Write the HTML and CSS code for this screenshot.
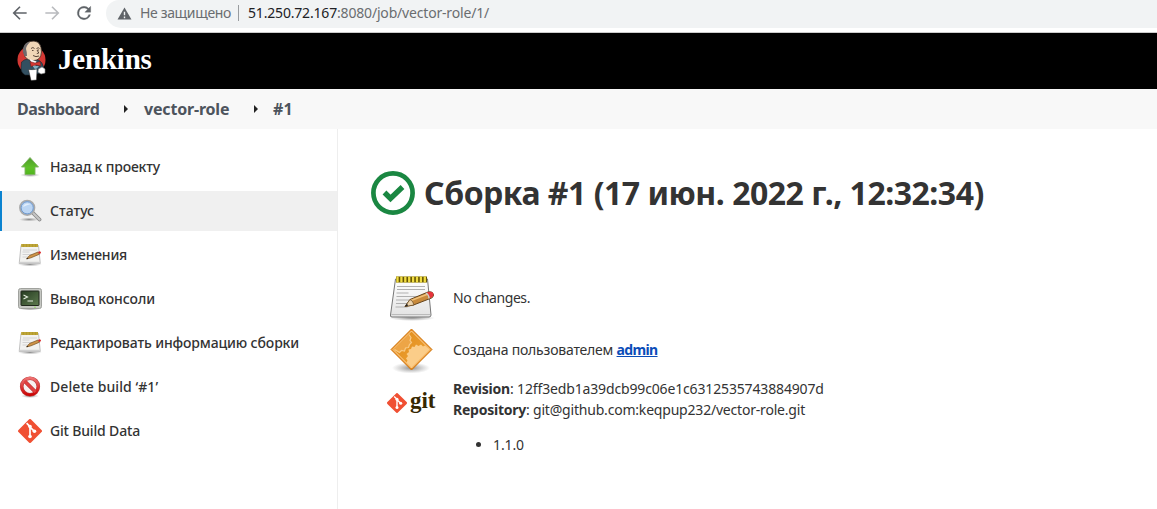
FILE: index.html
```
<!DOCTYPE html>
<html lang="ru">
<head>
<meta charset="utf-8">
<title>vector-role #1 [Jenkins]</title>
<link rel="stylesheet" href="styles.css">
</head>
<body>
<svg class="defs" aria-hidden="true">
  <defs>
    <linearGradient id="paper" x1="0" y1="0" x2="0" y2="1"><stop offset="0" stop-color="#fff"/><stop offset="1" stop-color="#e2e2e2"/></linearGradient>
    <linearGradient id="green" x1="0" y1="0" x2="0" y2="1"><stop offset="0" stop-color="#4f9a2c"/><stop offset=".6" stop-color="#5fc12a"/><stop offset="1" stop-color="#50b51d"/></linearGradient>
    <linearGradient id="screen" x1="0" y1="0" x2="1" y2="1"><stop offset="0" stop-color="#253b20"/><stop offset="1" stop-color="#5e7b50"/></linearGradient>
    <linearGradient id="red" x1="0" y1="0" x2="0" y2="1"><stop offset="0" stop-color="#ee7070"/><stop offset="1" stop-color="#cc0505"/></linearGradient>
    <linearGradient id="orange" x1="0" y1="0" x2="1" y2="1"><stop offset="0" stop-color="#e08a16"/><stop offset="1" stop-color="#f0a63c"/></linearGradient>
    <radialGradient id="shade"><stop offset="0" stop-color="#555" stop-opacity=".65"/><stop offset="1" stop-color="#777" stop-opacity="0"/></radialGradient>
  </defs>
  <symbol id="notepad" viewBox="0 0 48 48">
    <ellipse cx="24" cy="43" rx="23" ry="3" fill="url(#shade)"/>
    <path d="M7.500 4h32l3.500 36q0 2-2 2H4q-2 0-1.500-2z" fill="url(#paper)" stroke="#777"/>
    <path d="M3.500 39.500h38.500" stroke="#bbb"/>
    <path d="M9 11.500h28M9 14.500h28M8.500 18h12M8.500 21.500h25M8 25h20M8 28.500h15M7.500 32h12" stroke="#b0b0b0"/>
    <path d="M8 4.500h31" stroke="#665500" stroke-width="6"/>
    <path d="M9.500 1.500v6M13.400 1.500v6M17.300 1.500v6M21.200 1.500v6M25.100 1.500v6M29 1.500v6M32.900 1.500v6M36.800 1.500v6" stroke="#f0dc42" stroke-width="2.300"/>
    <path d="M17 31.500l5-7 18-7.500q5-1 5.500 3 0 2-2 3l-18 7z" fill="#c88a3c" stroke="#65451d"/>
    <path d="M23 25.500l17-6.500" stroke="#efc078" stroke-width="1.500"/>
    <path d="M17 31.500l5-7q3 1 4 5.500z" fill="#edd3aa" stroke="#65451d" stroke-width=".7"/>
    <path d="M17 31.500l2-3 1 2.200z" fill="#222"/>
    <path d="M40.500 17q4.500-1 5 2.500 0 2-2 3l-2 .8q.5-3.500-3-5.500z" fill="#e6343c"/>
    <path d="M38 18q3 2 3 5.500" fill="none" stroke="#ccc" stroke-width="1.500"/>
  </symbol>
  <symbol id="notepad-small" viewBox="0 0 24 24">
    <ellipse cx="12" cy="21.500" rx="12" ry="1.800" fill="url(#shade)"/>
    <path d="M3 2.500h17.500l1.800 18H1.200z" fill="#f2f2f0" stroke="#bbb" stroke-width=".9"/>
    <path d="M1.800 19.500h20" stroke="#d0d0d0" stroke-width="1.500"/>
    <path d="M5 7h14M4.500 9h7M4.500 11.500h11M4.500 14h6" stroke="#cfcfcf" stroke-width=".9"/>
    <path d="M3.200 2.500h16.800" stroke="#b39a2e" stroke-width="3"/>
    <path d="M4 1v3M7 1v3M10 1v3M13 1v3M16 1v3M19 1v3" stroke="#cbb647" stroke-width=".8"/>
    <path d="M8.500 16l3-3.500 8.500-3.500 1.500 2.200-8.500 3.600z" fill="#cf9448" stroke="#76501f" stroke-width=".7"/>
    <path d="M8.500 16l1-1.300.7 1z" fill="#111"/>
    <path d="M20 9l1.500-.7q1.600 0 1.600 1.800l-1.600 1z" fill="#d92b2b"/>
  </symbol>
  <symbol id="git-mark" viewBox="0 0 92 92">
    <path d="M90.200 41.900 50.200 1.900a5.900 5.900 0 0 0-8.400 0L1.900 41.900a5.900 5.900 0 0 0 0 8.300l40 40a5.900 5.900 0 0 0 8.300 0l40-40a5.900 5.900 0 0 0 0-8.300z" fill="#f05033"/>
    <path d="M33 16 46 29v38M46 31l17 16" fill="none" stroke="#fff" stroke-width="6.500"/>
    <circle cx="46" cy="29" r="7" fill="#fff"/><circle cx="46" cy="67" r="7" fill="#fff"/><circle cx="63" cy="47" r="7" fill="#fff"/>
  </symbol>
</svg>

<div class="browser-bar">
  <svg class="nav-icon" viewBox="0 0 24 24" fill="none" stroke="#5f6368" stroke-width="2"><path d="M20 12H5M12 4.500 4.500 12l7.500 7.500"/></svg>
  <svg class="nav-icon" viewBox="0 0 24 24" fill="none" stroke="#b9bbbe" stroke-width="2"><path d="M4 12h15M12 4.500l7.500 7.500-7.500 7.500"/></svg>
  <svg class="nav-icon" viewBox="0 0 24 24"><path d="M17.650 6.350A7.950 7.950 0 0 0 12 4a8 8 0 1 0 7.730 10h-2.080A6 6 0 1 1 12 6c1.660 0 3.140.69 4.220 1.780L13 11h7V4z" fill="#5f6368" stroke="#5f6368" stroke-width=".4"/></svg>
  <div class="address">
    <svg class="warning" viewBox="0 0 16 14"><path d="M8 .5 15.500 13.500H.5z" fill="#5f6368"/><path d="M8 5v4M8 10.300v1.700" stroke="#f1f3f4" stroke-width="1.500"/></svg>
    <span class="insecure">Не защищено</span>
    <span class="divider"></span>
    <span class="url"><span class="host">51.250.72.167</span>:8080/job/vector-role/1/</span>
  </div>
</div>

<header class="header">
  <svg class="butler" viewBox="0 0 30 42">
    <circle cx="14.500" cy="20" r="14" fill="#d33833"/>
    <path d="M4.500 22q3-3 7-3l10 1q4 2 5 7l.5 3-2 3-6 1-2 1H8q-4-2-4-7z" fill="#335061" stroke="#17242c" stroke-width=".6"/>
    <path d="M7 12Q6 3 13 1.500q9-2 11 6 1 5-.2 8-2 5-7 5-6 .5-8.800-4z" fill="#f0d6b7" stroke="#3d3028" stroke-width=".8"/>
    <path d="M7.500 16Q4.500 10 7 6q2-4 6-4-4 4-4 7l.7 3 .3 4z" fill="#6d6b6d"/>
    <path d="M14 8.500q2-2 3.500 0M19.500 8.500q2-1.500 3 0M20 10l1.800 3-2 .6M16 15.500q3 2 6 .5M15 10.500h1.500M20.500 10h1.500" fill="none" stroke="#49382c" stroke-width=".9"/>
    <path d="M12.500 19l7 2.500-2 7z" fill="#fff"/>
    <path d="M13 21.500l5 1.500 5-1.500 1 4.500-5-1-5 1.500z" fill="#d33833" stroke="#661d1d" stroke-width=".5"/>
    <path d="M16 26l2.500 4 3.500-4z" fill="#81b0c4"/>
    <path d="M21.500 29l3.500-2 3 2v4l-4 1-3-2z" fill="#fff" stroke="#888" stroke-width=".6"/>
    <path d="M11.500 29.500q5 .5 8.500-.5l-.5 11-5.500.5z" fill="#fff" stroke="#222" stroke-width=".5"/>
  </svg>
  <span class="brand">Jenkins</span>
</header>

<nav class="breadcrumbs">
  <a class="crumb crumb-home">Dashboard</a><i class="arrow"></i>
  <a class="crumb crumb-job">vector-role</a><i class="arrow"></i>
  <a class="crumb crumb-build">#1</a>
</nav>

<div class="page">
  <aside class="sidebar">
    <a class="task t-back"><svg viewBox="0 0 24 24"><ellipse cx="12" cy="20" rx="10" ry="2" fill="url(#shade)"/><path d="M12 2.500 20.500 12H17v7.500H7V12H3.500z" fill="url(#green)" stroke="#7fb263" stroke-width=".9"/></svg><span>Назад к проекту</span></a>
    <a class="task t-status active"><svg viewBox="0 0 24 24"><ellipse cx="11" cy="20.500" rx="10" ry="2" fill="url(#shade)"/><path d="M15 14l6.500 6.500" stroke="#888" stroke-width="3.800" stroke-linecap="round"/><path d="M15 14l6.500 6.500" stroke="#c4c4c4" stroke-width="2.200" stroke-linecap="round"/><circle cx="9.200" cy="8.800" r="7.300" fill="#a9c9ed" stroke="#aaa" stroke-width="1.700"/><circle cx="9.200" cy="8.800" r="6.100" fill="#bbd5f3" stroke="#6f99ce"/><path d="M5 8q1-5 8-3-4 1-8 3z" fill="#e1edfb"/></svg><span>Статус</span></a>
    <a class="task t-changes"><svg><use href="#notepad-small"/></svg><span>Изменения</span></a>
    <a class="task t-console"><svg viewBox="0 0 24 24"><ellipse cx="12" cy="22" rx="10" ry="1.500" fill="url(#shade)"/><rect x=".5" y="1.500" width="23" height="20" rx="2" fill="#c6c8c3" stroke="#999b96" stroke-width=".9"/><rect x="3" y="4" width="18" height="14.500" rx=".5" fill="url(#screen)" stroke="#20281c"/><path d="M5.500 8 9.500 10l-4 2M9.500 14h5.500" fill="none" stroke="#e6eee1" stroke-width="1.100"/><circle cx="17" cy="20.300" r=".7" fill="#80e040"/></svg><span>Вывод консоли</span></a>
    <a class="task t-edit"><svg><use href="#notepad-small"/></svg><span>Редактировать информацию сборки</span></a>
    <a class="task t-delete"><svg viewBox="0 0 24 24"><ellipse cx="12" cy="21" rx="9" ry="2" fill="url(#shade)"/><circle cx="12" cy="11.500" r="8.300" fill="#f7f1f1" stroke="#b84040" stroke-width="3.600"/><path d="M6.500 6 17.500 17" stroke="#b83030" stroke-width="3.800"/><circle cx="12" cy="11.500" r="8.300" fill="none" stroke="url(#red)" stroke-width="2.700"/><path d="M6.500 6 17.500 17" stroke="#df4040" stroke-width="2.700"/></svg><span>Delete build ‘#1’</span></a>
    <a class="task t-git"><svg><use href="#git-mark"/></svg><span>Git Build Data</span></a>
  </aside>

  <main class="main">
    <h1 class="title">
      <svg class="success" viewBox="0 0 44 44" fill="none" stroke="#1a8742"><circle cx="22" cy="22" r="19.600" stroke-width="4.700"/><path d="M13.500 21.500l6 6L31.500 16" stroke-width="5.400"/></svg>
      <span>Сборка #1 (17 июн. 2022 г., 12:32:34)</span>
    </h1>
    <div class="summary">
      <svg class="summary-icon"><use href="#notepad" x="1" y="1"/></svg>
      <div class="no-changes">No changes.</div>

      <svg class="summary-icon" viewBox="0 0 48 48">
        <ellipse cx="24" cy="42" rx="19" ry="5.500" fill="url(#shade)"/>
        <path d="M24.500 3 45 23.500 24.500 44 4 23.500z" fill="#e78a20" stroke="#d27b13" stroke-linejoin="round"/>
        <path d="M24.500 5 43 23.500 24.500 42 6 23.500z" fill="url(#orange)" stroke="#ffd79d"/>
        <path d="M22 8.500l2 3-1 3 1.500 2-2 2-1 3-3 .5-1 3-3-.5-2 2-6-3z" fill="#eda546"/>
        <path d="M22 8.500l2 3-1 3 1.500 2-2 2-1 3-3 .5-1 3-3-.5-2 2-5-3" fill="none" stroke="#f8c983" stroke-width="1.200"/>
        <path d="M24.500 41.500 42.500 23.500 38 19.500 36 20.500 34 18.500 31.500 20 29 18.500 27.500 21 25 20.500 24 23 21.500 23.500 22 26 19.500 28 21 30 19 32.500 20.500 34.500 19.500 36.500z" fill="#fbcd89"/>
      </svg>
      <div class="cause">Создана пользователем <a class="user">admin</a></div>

      <div class="git-logo"><svg><use href="#git-mark"/></svg><span>git</span></div>
      <div class="git-data">
        <div><b class="revision">Revision</b><span class="hash">: 12ff3edb1a39dcb99c06e1c6312535743884907d</span></div>
        <div><b class="repository">Repository</b><span class="remote">: git@github.com:keqpup232/vector-role.git</span></div>
        <ul class="refs"><li>1.1.0</li></ul>
      </div>
    </div>
  </main>
</div>
</body>
</html>
```
FILE: styles.css
```
* { box-sizing: border-box; }
body {
  margin: 0;
  height: 509px;
  overflow: hidden;
  display: flex;
  flex-direction: column;
  background: #fff;
  color: #333;
  font: 14px/21px "Noto Sans", "Open Sans", sans-serif;
}
svg { display: block; flex: none; }
.defs { position: absolute; width: 0; height: 0; }

.browser-bar {
  flex: none;
  display: flex;
  height: 33px;
  padding-left: 10px;
  border-bottom: 1px solid #ccc;
}
.nav-icon { width: 20px; height: 20px; margin: 3px 12px 0 0; }
.address {
  flex: 1;
  display: flex;
  align-items: center;
  height: 28px;
  padding: 0 0 2px 11px;
  border-bottom-left-radius: 15px;
  border-top-left-radius: 13px;
  background: #f1f3f4;
  color: #6a6d70;
}
.warning { width: 15px; height: 13px; margin-right: 8px; }
.insecure { width: 98px; padding-bottom: 2px; letter-spacing: -.35px; white-space: nowrap; }
.divider { width: 1px; height: 16px; margin-right: 9px; background: #999c9f; }
.url { padding-bottom: 2px; letter-spacing: -.18px; }
.host { color: #202124; }

.header {
  flex: none;
  display: flex;
  align-items: center;
  gap: 11px;
  height: 56px;
  padding-left: 17px;
  background: #000;
}
.butler { width: 30px; height: 42px; }
.brand {
  color: #fff;
  font: 700 29px/32px "Liberation Serif", serif;
  letter-spacing: -.2px;
  padding-bottom: 5px;
}

.breadcrumbs {
  flex: none;
  display: flex;
  align-items: center;
  height: 40px;
  padding-left: 17px;
  background: #f8f8f8;
}
.crumb { color: #4d545d; font-size: 16px; font-weight: 700; white-space: nowrap; }
.crumb-home { width: 82px; letter-spacing: -.45px; }
.crumb-job { width: 86px; padding-left: 1px; letter-spacing: -.18px; }
.crumb-build { letter-spacing: .2px; }
.arrow {
  margin: 0 15px 0 25px;
  border: 4px solid transparent;
  border-left-color: #222;
  border-right: 0;
}

.page { flex: 1; display: flex; min-height: 0; }
.sidebar {
  display: flex;
  flex-direction: column;
  gap: 4px;
  width: 338px;
  padding-top: 18px;
  border-right: 1px solid #eee;
}
.task {
  display: flex;
  align-items: center;
  gap: 8px;
  height: 40px;
  padding-left: 18px;
  font-weight: 500;
}
.task svg { width: 24px; height: 24px; }
.task span { padding-bottom: 2px; }
.active { padding-left: 16px; border-left: 2px solid #0b83d0; background: #f0f0f0; }
.t-back { letter-spacing: -.17px; }
.t-changes { letter-spacing: -.22px; }
.t-console { letter-spacing: -.08px; }
.t-edit { letter-spacing: -.14px; }
.t-delete { letter-spacing: .08px; }
.t-git { letter-spacing: -.17px; }

.main { flex: 1; padding: 42px 0 0 33px; }
.title {
  display: flex;
  align-items: center;
  gap: 9px;
  margin: 0 0 59px;
  height: 44px;
  font-size: 32px;
  line-height: 40px;
  letter-spacing: -.49px;
}
.success { width: 44px; height: 44px; }
.summary {
  display: grid;
  grid-template-columns: 48px 1fr;
  grid-template-rows: 48px 48px auto;
  column-gap: 18px;
  row-gap: 4px;
  align-items: center;
  padding-left: 16px;
}
.summary-icon { width: 48px; height: 48px; }
.no-changes { padding-bottom: 2px; letter-spacing: -.42px; }
.cause { padding-bottom: 2px; letter-spacing: -.21px; }
.user { color: #0b4db8; font-weight: 700; letter-spacing: -.64px; text-decoration: underline; }
.git-logo {
  display: flex;
  align-self: start;
  align-items: center;
  gap: 3px;
  height: 21px;
  margin-top: 14px;
}
.git-logo svg { width: 20px; height: 20px; }
.git-logo span {
  color: #362701;
  font: 700 23px/21px "Liberation Serif", serif;
  letter-spacing: -.1px;
  padding-bottom: 5px;
}
.git-data { align-self: start; }
.revision { letter-spacing: -.19px; }
.hash { letter-spacing: -.15px; }
.repository { letter-spacing: -.24px; }
.remote { letter-spacing: -.2px; }
.refs { margin: 14px 0 0; padding-left: 40px; letter-spacing: -.1px; }
```
